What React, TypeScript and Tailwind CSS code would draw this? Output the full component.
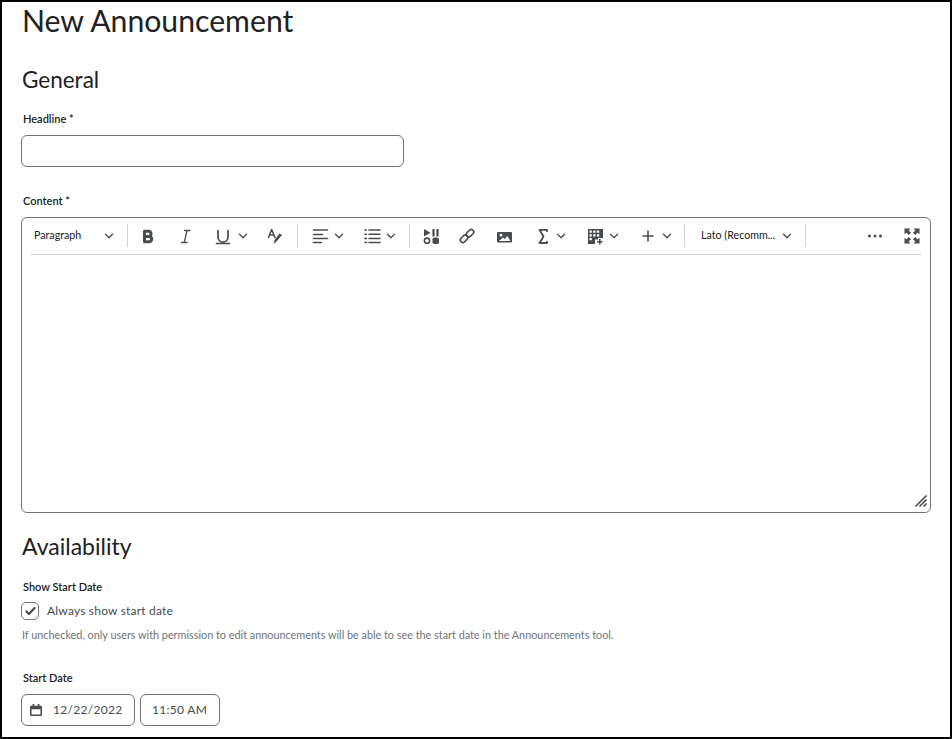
const ICON = '#494c4e';

function Chevron({ className = '' }: { className?: string }) {
  return (
    <svg className={`h-[6px] w-[10px] shrink-0 ${className}`} viewBox="0 0 10 6" fill="none" stroke={ICON} strokeWidth={1.3} strokeLinecap="round" strokeLinejoin="round">
      <path d="M1.500 1.200L5 4.700l3.500-3.500" />
    </svg>
  );
}

function Sep({ className = '' }: { className?: string }) {
  return <div className={`h-[23px] w-px shrink-0 bg-[#cdd5dc] ${className}`} />;
}

function Icon({ className = '', children }: { className?: string; children: React.ReactNode }) {
  return (
    <svg className={`h-[18px] w-[18px] shrink-0 ${className}`} viewBox="0 0 18 18" fill="none">
      {children}
    </svg>
  );
}

function Toolbar() {
  return (
    <div className="flex h-[36px] items-center pb-px">
      <span className="ml-3 w-[58px] text-[10.7px] text-[#202122]">Paragraph</span>
      <Chevron className="ml-[12px]" />
      <Sep className="ml-[13px]" />
      {/* bold */}
      <Icon className="ml-[11px]">
        <path d="M5.500 4.300h4.500a2.700 2.700 0 0 1 0 5.200H5.500zM5.500 9.500H10.700a2.700 2.700 0 0 1 0 5.200H5.500z" stroke={ICON} strokeWidth={3} strokeLinejoin="round" />
      </Icon>
      {/* italic */}
      <Icon className="ml-[19px]">
        <path d="M8.500 3.500h5.500M5.500 15.500H11M11 3.500l-2.800 12" stroke={ICON} strokeWidth={1.300} strokeLinecap="round" />
      </Icon>
      {/* underline */}
      <Icon className="ml-5">
        <path d="M4 3.500v6.700a5 5 0 0 0 10 0V3.500" stroke={ICON} strokeWidth={1.700} strokeLinecap="round" />
        <path d="M2.500 16.500h13" stroke={ICON} strokeWidth={1.700} strokeLinecap="round" />
      </Icon>
      <Chevron className="ml-[6px]" />
      {/* font colour */}
      <Icon className="ml-[17px]">
        <path d="M3.500 10.500L6.700 2.500l3.200 8M4.700 8h4" stroke={ICON} strokeWidth={1.500} strokeLinecap="round" strokeLinejoin="round" />
        <path d="M14.500 6.500l2.500 1.500-5 6-3.500 3 1.200-4.200z" fill={ICON} />
      </Icon>
      <Sep className="ml-[14px]" />
      {/* align */}
      <Icon className="ml-[13px]">
        <path d="M2.500 3h14M2.500 7.500h9M2.500 11.500h14M2.500 15.500h8" stroke={ICON} strokeWidth={1.500} strokeLinecap="round" />
      </Icon>
      <Chevron className="ml-[5px]" />
      {/* list */}
      <Icon className="ml-[19px]">
        <path d="M6 3h11M6 7.200h11M6 11.400h11M6 15.500h11" stroke={ICON} strokeWidth={1.500} strokeLinecap="round" />
        <path d="M2 3h1.300M2 7.200h1.300M2 11.400h1.300M2 15.500h1.300" stroke={ICON} strokeWidth={1.600} strokeLinecap="round" />
      </Icon>
      <Chevron className="ml-[5px]" />
      <Sep className="ml-[13px]" />
      {/* media */}
      <Icon className="ml-3">
        <path d="M2 2l6.500 3.700L2 9.500z" fill={ICON} />
        <path d="M11.500 2v7.500M15.500 2v7.500" stroke={ICON} strokeWidth={2.200} />
        <circle cx="5" cy="13.700" r="2.600" stroke={ICON} strokeWidth={1.600} />
        <rect x="10.500" y="10.500" width="6.500" height="6.500" rx="1.800" fill={ICON} />
      </Icon>
      {/* link */}
      <Icon className="ml-[18px]">
        <rect x="1.800" y="9.300" width="8.400" height="5" rx="2.500" transform="rotate(-45 6 11.800)" stroke={ICON} strokeWidth={1.600} />
        <rect x="7.800" y="3.700" width="8.400" height="5" rx="2.500" transform="rotate(-45 12 6.200)" stroke={ICON} strokeWidth={1.600} />
      </Icon>
      {/* image */}
      <Icon className="ml-[19px]">
        <path fillRule="evenodd" d="M3 5h13a1 1 0 0 1 1 1v8.500a1 1 0 0 1-1 1H3a1 1 0 0 1-1-1V6a1 1 0 0 1 1-1zM4 14h11.500l-3.300-5-2.500 3-1.700-1.500L4 14zM6 6.800a1.400 1.400 0 1 0 0 2.800 1.400 1.400 0 0 0 0-2.800z" fill={ICON} />
      </Icon>
      {/* sigma */}
      <Icon className="ml-5">
        <path d="M14 4.200V2.800H6.500l4 6.700-4 6.500H14v-1.400" stroke={ICON} strokeWidth={1.800} strokeLinejoin="round" strokeLinecap="round" />
      </Icon>
      <Chevron className="ml-[5px]" />
      {/* table */}
      <Icon className="ml-5">
        <path fillRule="evenodd" d="M2 2h15v9h-5v1.500H9V17H2V2zM3.500 3.500v2.300h2.300V3.500H3.500zm3.700 0v2.300h2.300V3.500H7.200zm3.700 0v2.300h2.300V3.500h-2.300zM3.500 7.200v2.300h2.300V7.200H3.500zm3.700 0v2.300h2.300V7.200H7.200zm3.700 0v2.300h2.300V7.200h-2.300zM3.500 11v2.300h2.300V11H3.500z" fill={ICON} />
        <path d="M13.800 12v5.500M11 14.800h5.500" stroke={ICON} strokeWidth={1.500} />
      </Icon>
      <Chevron className="ml-[5px]" />
      {/* plus */}
      <Icon className="ml-5">
        <path d="M9 4v10M4 9h10" stroke={ICON} strokeWidth={1.600} strokeLinecap="round" />
      </Icon>
      <Chevron className="ml-[5px]" />
      <Sep className="ml-3" />
      <span className="ml-4 w-[76px] whitespace-nowrap text-[10.7px] text-[#202122]">Lato (Recomm...</span>
      <Chevron className="ml-[5px]" />
      <Sep className="ml-[13px]" />
      {/* more */}
      <Icon className="ml-[60px]">
        <circle cx="3.500" cy="9" r="1.500" fill={ICON} />
        <circle cx="9" cy="9" r="1.500" fill={ICON} />
        <circle cx="14.500" cy="9" r="1.500" fill={ICON} />
      </Icon>
      {/* fullscreen */}
      <Icon className="ml-[19px]">
        <path d="M1.500 1.500h6L5.600 3.400 8 5.800 5.800 8 3.400 5.600 1.500 7.500zM16.500 1.500v6l-1.900-1.900L12.200 8 10 5.800l2.400-2.400-1.900-1.900zM1.500 16.500v-6l1.900 1.900L5.800 10 8 12.200l-2.400 2.400 1.900 1.900zM16.500 16.500h-6l1.900-1.900L10 12.200 12.200 10l2.400 2.400 1.900-1.900z" fill={ICON} />
      </Icon>
    </div>
  );
}

export default function App() {
  return (
    <div className="h-[739px] w-[952px] overflow-hidden border-2 border-black bg-white font-['Lato','Liberation_Sans',sans-serif] text-[#202122]">
      <div className="pl-[19px] pr-[19px]">
        <h1 className="ml-px text-[30.200px] leading-[36px]">New Announcement</h1>

        <h2 className="ml-px mt-[28px] text-[22.500px] leading-[28px]">General</h2>

        <label className="ml-[2px] mt-[17px] block text-[11px] font-semibold leading-[16px]">Headline *</label>
        <div className="mt-2 h-[32px] w-[383px] rounded-md border border-[#6e7477]" />

        <label className="ml-[2px] mt-[26px] block text-[11px] font-semibold leading-[16px]">Content *</label>
        <div className="mt-2 flex h-[296px] w-[910px] flex-col rounded-md border border-[#6e7477]">
          <Toolbar />
          <div className="mx-[9px] h-px bg-[#cdd5dc]" />
          <div className="flex flex-1 items-end justify-end pb-[5px] pr-[3px]">
            <svg className="h-[12px] w-[12px]" viewBox="0 0 12 12" fill="none" stroke={ICON} strokeWidth={1.700} strokeLinecap="round">
              <path d="M1 11L11 1M5 11l6-6M9 11l2-2" />
            </svg>
          </div>
        </div>

        <h2 className="ml-px mt-[19px] text-[23px] leading-[28px]">Availability</h2>

        <label className="ml-[2px] mt-[19px] block text-[11px] font-semibold leading-[16px]">Show Start Date</label>
        <div className="mt-[6px] flex items-center">
          <div className="flex h-[18px] w-[18px] items-center justify-center rounded-[5px] border border-[#6e7477]">
            <svg className="h-[10px] w-[11px]" viewBox="0 0 11 10" fill="none" stroke={ICON} strokeWidth={2.200} strokeLinecap="round" strokeLinejoin="round">
              <path d="M1.500 5.500l2.500 2.500 5.500-6" />
            </svg>
          </div>
          <span className="ml-2 text-[12px] leading-[20px] tracking-[0.2px] text-[#494c4e]">Always show start date</span>
        </div>
        <p className="ml-px mt-[6px] whitespace-nowrap text-[10.830px] leading-[16px] text-[#6e7477]">
          If unchecked, only users with permission to edit announcements will be able to see the start date in the Announcements tool.
        </p>

        <label className="ml-[2px] mt-[27px] block text-[11px] font-semibold leading-[16px]">Start Date</label>
        <div className="mt-2 flex gap-[5px]">
          <div className="flex h-[32px] w-[114px] items-center rounded-md border border-[#6e7477] pl-2 text-[12px] text-[#494c4e]">
            <svg className="h-[12px] w-[12px]" viewBox="0 0 14 14" fill="none">
              <path fillRule="evenodd" d="M3 0h2v2h4V0h2v2h1.500A1.500 1.500 0 0 1 14 3.500v9a1.500 1.500 0 0 1-1.500 1.500h-11A1.500 1.500 0 0 1 0 12.500v-9A1.500 1.500 0 0 1 1.500 2H3V0zM1.800 6v6.200h10.400V6H1.800z" fill={ICON} />
            </svg>
            <span className="ml-[11px] tracking-[0.3px]">12/22/2022</span>
          </div>
          <div className="flex h-[32px] w-[80px] items-center justify-center rounded-md border border-[#6e7477] pr-px text-[12px] tracking-[0.3px] text-[#494c4e]">
            11:50 AM
          </div>
        </div>
      </div>
    </div>
  );
}
